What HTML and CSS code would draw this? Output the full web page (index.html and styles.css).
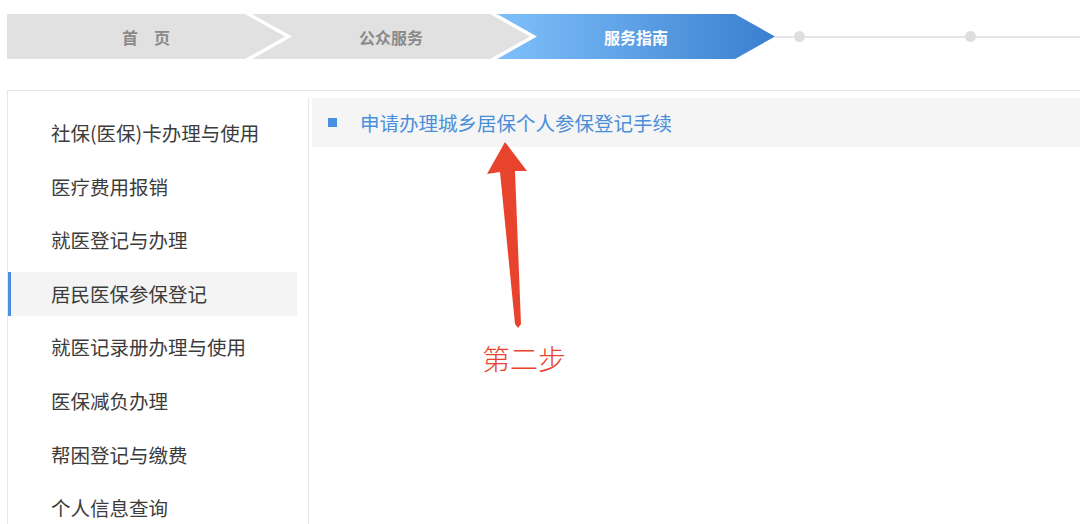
FILE: index.html
```html
<!DOCTYPE html>
<html lang="zh-CN">
<head>
    <meta charset="UTF-8">
    <meta name="viewport" content="width=device-width, initial-scale=1.0">
    <title>服务指南</title>
    <link rel="stylesheet" href="styles.css">
</head>
<body>
    <nav class="steps">
        <div class="step step-first">首&emsp;页</div>
        <div class="step">公众服务</div>
        <div class="step step-active">服务指南</div>
        <div class="track">
            <span class="dot"></span>
            <span class="dot"></span>
        </div>
    </nav>

    <main class="panel">
        <ul class="menu">
            <li class="menu-item">社保(医保)卡办理与使用</li>
            <li class="menu-item">医疗费用报销</li>
            <li class="menu-item">就医登记与办理</li>
            <li class="menu-item active">居民医保参保登记</li>
            <li class="menu-item">就医记录册办理与使用</li>
            <li class="menu-item">医保减负办理</li>
            <li class="menu-item">帮困登记与缴费</li>
            <li class="menu-item">个人信息查询</li>
        </ul>
        <section class="content">
            <div class="guide-row">
                <span class="square"></span>
                <a class="guide-link" href="#">申请办理城乡居保个人参保登记手续</a>
            </div>
        </section>
    </main>

    <!-- 标注：红色箭头 + 第二步 -->
    <svg class="note-arrow" width="60" height="200" viewBox="480 135 60 200">
        <polygon points="505,142 527,171 515,171 521,324 518,328 515,324 500,172 487,174" fill="#e8442d"/>
    </svg>
    <div class="note-text">第二步</div>
</body>
</html>
```

FILE: styles.css
```css
body {
    margin: 0;
    width: 1080px;
    height: 524px;
    overflow: hidden;
    position: relative;
    background: #fff;
    font-family: "Noto Sans CJK SC", "Noto Sans", sans-serif;
}

/* 顶部步骤条 */
.steps {
    display: flex;
    align-items: center;
    margin: 14px 0 0 7px;
    height: 45px;
}

.step {
    flex: 0 0 278px;
    height: 45px;
    margin-left: -33px;
    display: flex;
    align-items: center;
    justify-content: center;
    background: #e1e1e1;
    color: #8a8a8a;
    font-size: 16px;
    font-weight: bold;
    clip-path: polygon(0 0, calc(100% - 40px) 0, 100% 50%, calc(100% - 40px) 100%, 0 100%, 40px 50%);
}

.step-first {
    margin-left: 0;
    clip-path: polygon(0 0, calc(100% - 40px) 0, 100% 50%, calc(100% - 40px) 100%, 0 100%);
}

.step-active {
    background: linear-gradient(to right, #7fc0fa, #3a7fd0);
    color: #fff;
}

.track {
    flex: 1;
    height: 11px;
    display: flex;
    align-items: center;
    padding-left: 19px;
    gap: 160px;
    background: linear-gradient(#e6e6e6, #e6e6e6) no-repeat 0 50% / 100% 2px;
}

.dot {
    width: 11px;
    height: 11px;
    border-radius: 50%;
    background: #dedede;
}

/* 主面板 */
.panel {
    display: flex;
    box-sizing: border-box;
    margin: 31px 0 0 7px;
    width: 1073px;
    height: 434px;
    overflow: hidden;
    border: 1px solid #e6e6e6;
    border-right: none;
    border-bottom: none;
}

.menu {
    list-style: none;
    margin: 0;
    padding: 20px 0 0;
    width: 300px;
    display: flex;
    flex-direction: column;
    gap: 9.6px;
}

.menu-item {
    flex: none;
    width: 246px;
    height: 44px;
    line-height: 44px;
    margin-left: -1px;
    padding-left: 40px;
    border-left: 4px solid transparent;
    font-size: 19.5px;
    color: #3c3c3c;
}

.menu-item.active {
    background: #f4f4f4;
    border-left-color: #4a90e2;
}

.content {
    flex: 1;
    margin-top: 7px;
    padding-left: 3px;
    border-left: 1px solid #e8e8e8;
}

.guide-row {
    height: 49px;
    display: flex;
    align-items: center;
    background: #f5f5f5;
    padding-left: 16px;
}

.square {
    width: 9px;
    height: 9px;
    background: #4a90e2;
    margin-right: 23px;
}

.guide-link {
    color: #4a8fdb;
    text-decoration: none;
    font-size: 19.5px;
}

/* 标注 */
.note-arrow {
    position: absolute;
    left: 480px;
    top: 135px;
}

.note-text {
    position: absolute;
    left: 482px;
    top: 340px;
    font-size: 28px;
    font-weight: 300;
    line-height: 36px;
    color: #e8442d;
}
```
